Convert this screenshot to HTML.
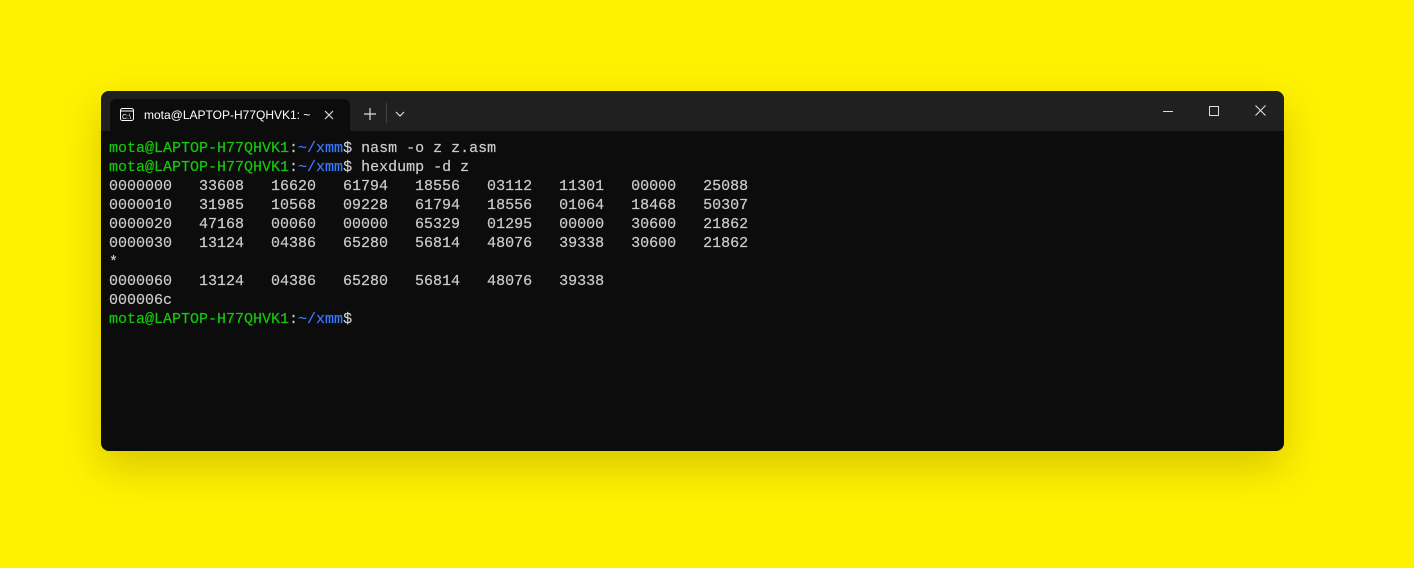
<!DOCTYPE html>
<html><head><style>
body{margin:0;width:1414px;height:568px;background:#fff200;position:relative;overflow:hidden;font-family:"Liberation Sans",sans-serif}
.win{position:absolute;left:101px;top:91px;width:1183px;height:360px;background:#0c0c0c;border-radius:8px;overflow:hidden;box-shadow:0 16px 40px rgba(120,100,0,0.3)}
.bar{position:absolute;left:0;top:0;width:100%;height:40px;background:#202020}
.tab{position:absolute;left:9px;top:8px;width:240px;height:32px;background:#0c0c0c;border-radius:6px 6px 0 0}
.tab .t{position:absolute;left:34px;top:9px;color:#fff;font-size:12px}
pre{position:absolute;left:8px;top:48px;margin:0;font-family:"Liberation Mono",monospace;font-size:15px;line-height:19px;color:#cccccc;-webkit-text-stroke:0.2px #cccccc}
.g{color:#16c60c;-webkit-text-stroke:0.2px #16c60c}.b{color:#3b78ff;-webkit-text-stroke:0.2px #3b78ff}
</style></head><body>
<div class="win">
<div class="bar">
<div class="tab">
<svg style="position:absolute;left:10px;top:9px" width="14" height="13"><rect x="0.5" y="0.5" width="13" height="12" rx="2" fill="none" stroke="#fff"/><line x1="0.5" y1="3" x2="13.5" y2="3" stroke="#fff"/><text x="2" y="11" font-size="7" fill="#fff" font-family="Liberation Sans">C:\</text></svg>
<span class="t">mota@LAPTOP-H77QHVK1: ~</span>
<svg style="position:absolute;left:214px;top:11px" width="10" height="10"><path d="M1 1L9 9M9 1L1 9" stroke="#ddd" stroke-width="1.2"/></svg>
</div>
<svg style="position:absolute;left:263px;top:17px" width="12" height="12"><path d="M6 0V12M0 6H12" stroke="#ddd" stroke-width="1.2"/></svg>
<div style="position:absolute;left:285px;top:12px;width:1px;height:20px;background:#444"></div>
<svg style="position:absolute;left:294px;top:20px" width="10" height="6"><path d="M1 1L5 5L9 1" stroke="#ddd" stroke-width="1.2" fill="none"/></svg>
<div style="position:absolute;left:1062px;top:20px;width:10px;height:1px;background:#ddd"></div>
<div style="position:absolute;left:1108px;top:15px;width:8px;height:8px;border:1px solid #ddd"></div>
<svg style="position:absolute;left:1154px;top:14px" width="11" height="11"><path d="M0.5 0.5L10.5 10.5M10.5 0.5L0.5 10.5" stroke="#ddd" stroke-width="1.1"/></svg>
</div>
<pre><span class="g">mota@LAPTOP-H77QHVK1</span>:<span class="b">~/xmm</span>$ nasm -o z z.asm
<span class="g">mota@LAPTOP-H77QHVK1</span>:<span class="b">~/xmm</span>$ hexdump -d z
0000000   33608   16620   61794   18556   03112   11301   00000   25088
0000010   31985   10568   09228   61794   18556   01064   18468   50307
0000020   47168   00060   00000   65329   01295   00000   30600   21862
0000030   13124   04386   65280   56814   48076   39338   30600   21862
*
0000060   13124   04386   65280   56814   48076   39338
000006c
<span class="g">mota@LAPTOP-H77QHVK1</span>:<span class="b">~/xmm</span>$</pre>
</div>
</body></html>
